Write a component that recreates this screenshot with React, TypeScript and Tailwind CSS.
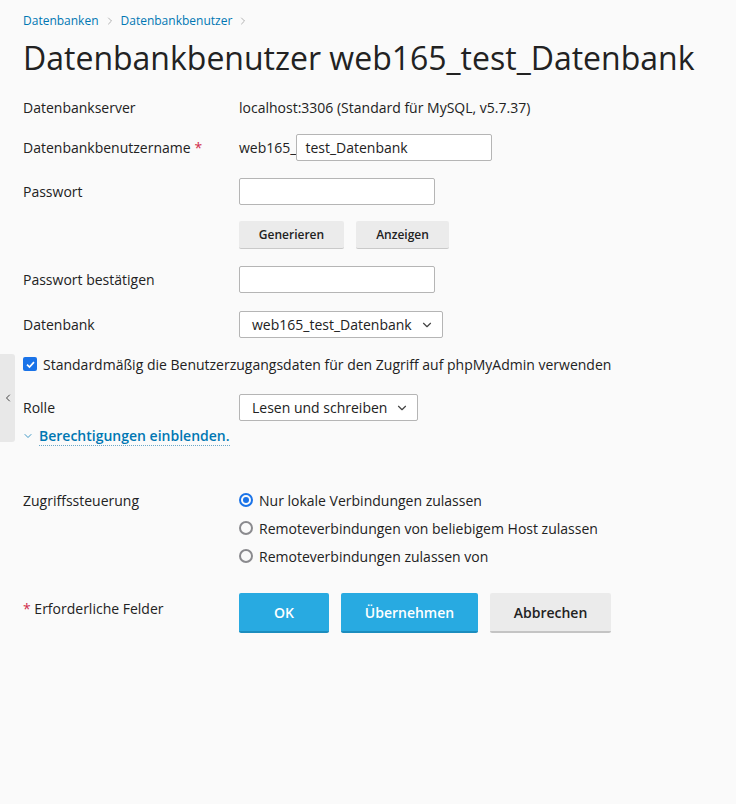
import { ChevronDown, ChevronLeft, ChevronRight } from "lucide-react"

const font = { fontFamily: '"Open Sans", "Noto Sans", sans-serif' }

function Label({ children, required }: { children: React.ReactNode; required?: boolean }) {
  return (
    <div className="w-[216px] shrink-0 text-[14px] text-[#222]">
      {children}
      {required && <span className="ml-1 text-[#d02d4b]">*</span>}
    </div>
  )
}

function TextInput({ w, value }: { w: string; value?: string }) {
  return (
    <div className={`${w} h-[27px] border border-[#b5b5b5] rounded-[2px] bg-white px-2 flex items-center text-[14px] text-[#222]`}>
      {value}
    </div>
  )
}

function Select({ w, value }: { w: string; value: string }) {
  return (
    <div className={`${w} h-[27px] border border-[#b5b5b5] rounded-[2px] bg-white pl-3 pr-2 flex items-center justify-between text-[14px] text-[#222]`}>
      <span>{value}</span>
      <ChevronDown className="w-3.5 h-3.5 text-[#444]" strokeWidth={2} />
    </div>
  )
}

function Radio({ checked, label }: { checked?: boolean; label: string }) {
  return (
    <div className="flex items-center h-[28px] text-[14px] text-[#222]">
      <span
        className={`w-[14px] h-[14px] rounded-full border-2 flex items-center justify-center mr-[6px] ${
          checked ? "border-[#1a73e8]" : "border-[#8a8a8e]"
        }`}
      >
        {checked && <span className="w-[6px] h-[6px] rounded-full bg-[#1a73e8]" />}
      </span>
      {label}
    </div>
  )
}

export default function App() {
  return (
    <div className="relative min-h-[804px] w-full bg-[#fafafa]" style={font}>
      {/* Seitenleiste einklappen */}
      <div className="absolute left-0 top-[354px] w-[15px] h-[88px] bg-[#e8e8e8] rounded-r-[3px] flex items-center justify-center">
        <ChevronLeft className="w-3 h-3 text-[#444]" strokeWidth={2} />
      </div>

      <div className="pl-[23px] pt-[13px]">
        <div className="flex items-center text-[12px] text-[#0077b3] h-[16px]">
          <span>Datenbanken</span>
          <ChevronRight className="w-3 h-3 mx-[5px] text-[#999]" strokeWidth={1.5} />
          <span>Datenbankbenutzer</span>
          <ChevronRight className="w-3 h-3 mx-[5px] text-[#999]" strokeWidth={1.5} />
        </div>

        <h1 className="mt-[8px] text-[32px] leading-[42px] text-[#222]">
          Datenbankbenutzer web165_test_Datenbank
        </h1>

        <div className="mt-[18px] flex items-center h-[20px]">
          <Label>Datenbankserver</Label>
          <div className="text-[14px] text-[#222]">localhost:3306 (Standard für MySQL, v5.7.37)</div>
        </div>

        <div className="mt-[17px] flex items-center h-[27px]">
          <Label required>Datenbankbenutzername</Label>
          <span className="text-[14px] text-[#222]">web165_</span>
          <TextInput w="w-[196px]" value="test_Datenbank" />
        </div>

        <div className="mt-[17px] flex items-center h-[27px]">
          <Label>Passwort</Label>
          <TextInput w="w-[196px]" />
        </div>

        <div className="mt-[16px] flex gap-[12px] pl-[216px]">
          <button className="w-[105px] h-[28px] bg-[#ebebeb] border-b border-[#c9c9c9] rounded-[2px] text-[12px] font-semibold text-[#222]">
            Generieren
          </button>
          <button className="w-[93px] h-[28px] bg-[#ebebeb] border-b border-[#c9c9c9] rounded-[2px] text-[12px] font-semibold text-[#222]">
            Anzeigen
          </button>
        </div>

        <div className="mt-[17px] flex items-center h-[27px]">
          <Label>Passwort bestätigen</Label>
          <TextInput w="w-[196px]" />
        </div>

        <div className="mt-[18px] flex items-center h-[27px]">
          <Label>Datenbank</Label>
          <Select w="w-[204px]" value="web165_test_Datenbank" />
        </div>

        <div className="mt-[13px] flex items-center h-[26px] text-[14px] text-[#222]">
          <span className="w-[14px] h-[14px] rounded-[2px] bg-[#1a73e8] flex items-center justify-center mr-[6px]">
            <svg viewBox="0 0 12 12" className="w-[11px] h-[11px]">
              <path d="M2.2 6.2 L4.9 8.8 L9.8 3.4" fill="none" stroke="white" strokeWidth="1.8" />
            </svg>
          </span>
          Standardmäßig die Benutzerzugangsdaten für den Zugriff auf phpMyAdmin verwenden
        </div>

        <div className="mt-[17px] flex items-center h-[27px]">
          <Label>Rolle</Label>
          <Select w="w-[179px]" value="Lesen und schreiben" />
        </div>

        <div className="mt-[4px] flex items-center h-[22px]">
          <ChevronDown className="w-3 h-3 ml-[-1px] mr-[5px] text-[#0077b3]" strokeWidth={1.5} />
          <span className="text-[14px] font-semibold text-[#0077b3] border-b border-dotted border-[#6aa7c7] leading-[18px]">
            Berechtigungen einblenden.
          </span>
        </div>

        <div className="mt-[39px] flex">
          <div className="w-[216px] shrink-0 text-[14px] text-[#222] pt-[4px]">Zugriffssteuerung</div>
          <div className="flex flex-col">
            <Radio checked label="Nur lokale Verbindungen zulassen" />
            <Radio label="Remoteverbindungen von beliebigem Host zulassen" />
            <Radio label="Remoteverbindungen zulassen von" />
          </div>
        </div>

        <div className="mt-[23px] flex">
          <div className="w-[216px] shrink-0 text-[14px] text-[#222] pt-[5px]">
            <span className="text-[#d02d4b]">*</span> Erforderliche Felder
          </div>
          <div className="flex gap-[12px]">
            <button className="w-[90px] h-[40px] bg-[#28aae1] border-b-2 border-[#1c8dbe] rounded-[2px] text-[14px] font-semibold text-white">
              OK
            </button>
            <button className="w-[137px] h-[40px] bg-[#28aae1] border-b-2 border-[#1c8dbe] rounded-[2px] text-[14px] font-semibold text-white">
              Übernehmen
            </button>
            <button className="w-[121px] h-[40px] bg-[#ebebeb] border-b-2 border-[#c4c4c4] rounded-[2px] text-[14px] font-semibold text-[#222]">
              Abbrechen
            </button>
          </div>
        </div>
      </div>
    </div>
  )
}
